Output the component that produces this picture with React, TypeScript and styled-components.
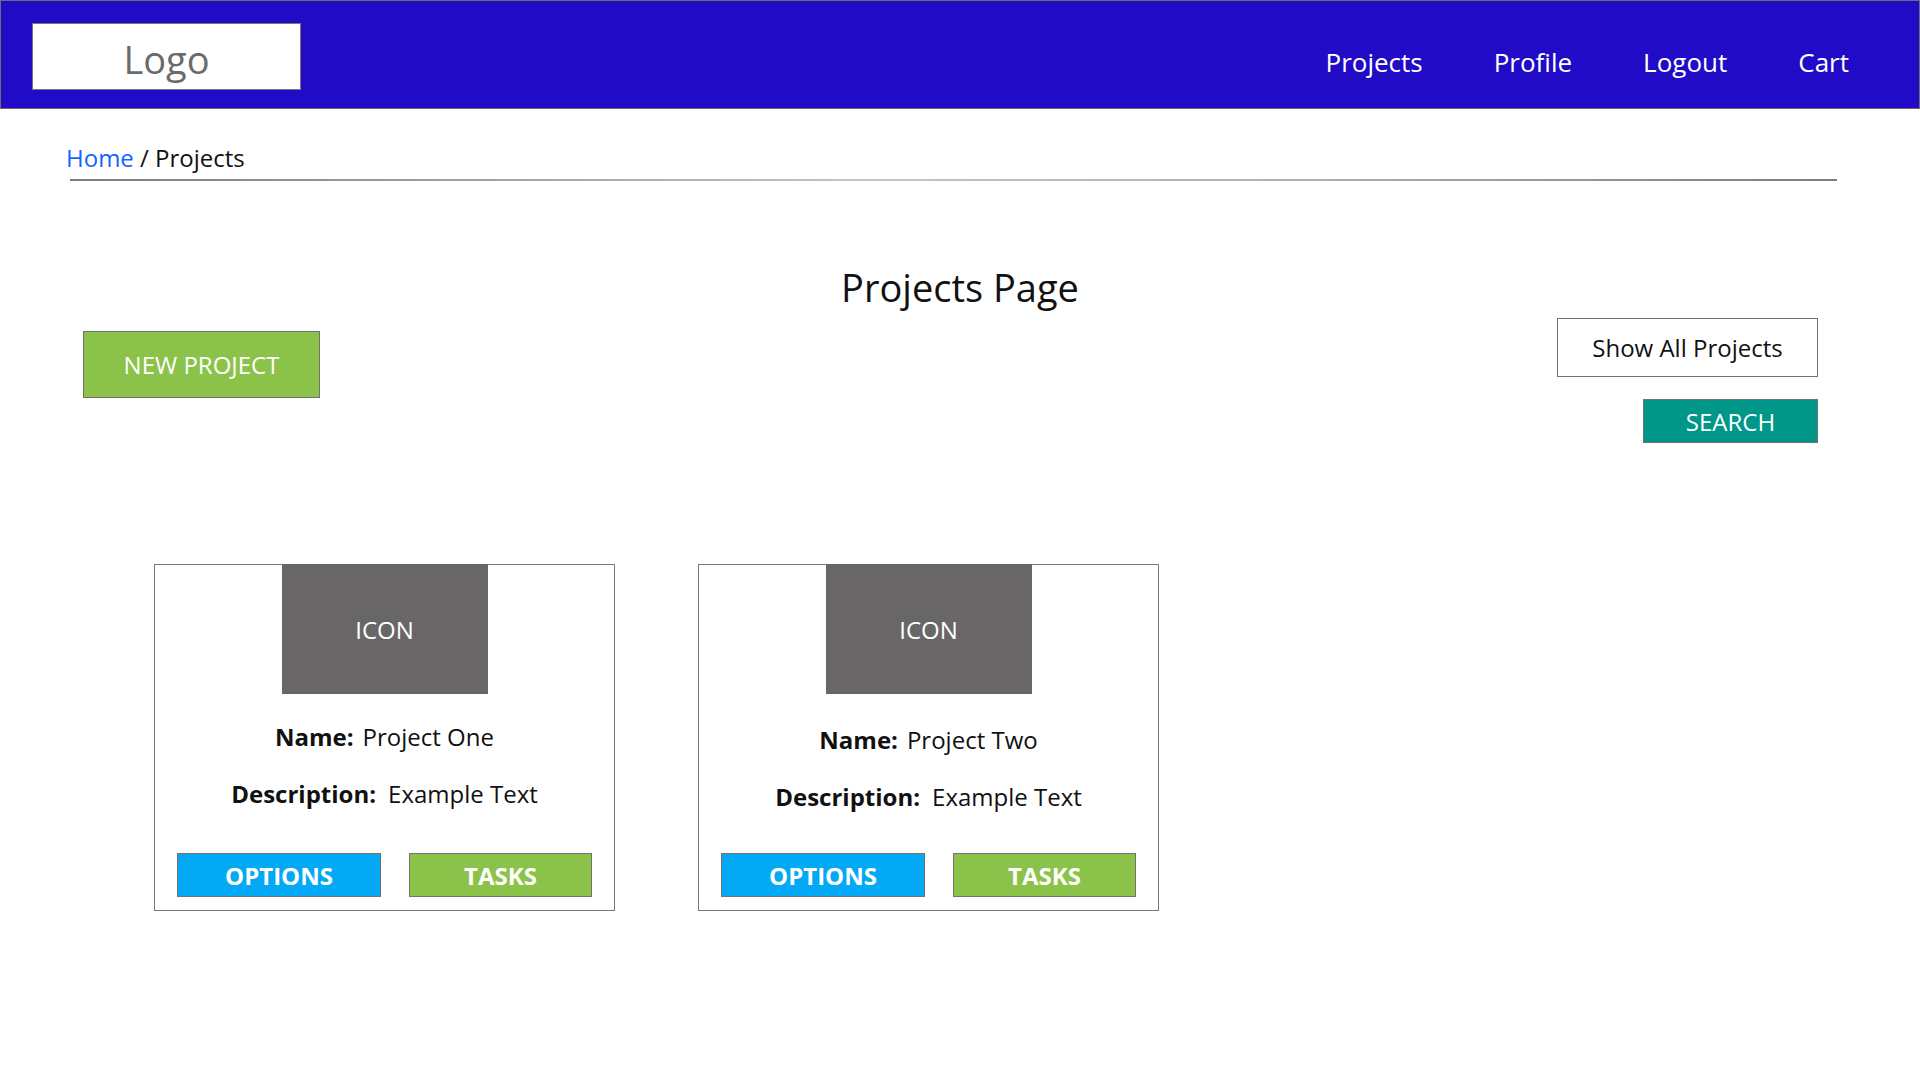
import React from "react";
import styled, { createGlobalStyle } from "styled-components";

const GlobalStyle = createGlobalStyle`
  html, body { margin: 0; padding: 0; background: #ffffff; }
  body {
    font-family: "Open Sans", "Noto Sans", sans-serif;
    color: #111111;
    width: 1920px;
    min-height: 1080px;
    overflow: hidden;
  }
  * { box-sizing: border-box; }
`;

const Header = styled.header`
  height: 109px;
  background: #210bc6;
  border: 1px solid #6e6e6e;
  display: flex;
  align-items: flex-start;
  justify-content: space-between;
  padding: 22px 70px 0 31px;
`;

const LogoBox = styled.div`
  width: 269px;
  height: 67px;
  background: #ffffff;
  border: 1px solid #777777;
  display: flex;
  align-items: center;
  justify-content: center;
  font-size: 38px;
  color: #6b6b6b;
  padding-top: 5px;
`;

const Nav = styled.nav`
  display: flex;
  gap: 71px;
  margin-top: 21px;
`;

const NavLink = styled.a`
  color: #ffffff;
  font-size: 26px;
  text-decoration: none;
`;

const Breadcrumb = styled.div`
  margin: 32px 0 0 66px;
  font-size: 24px;
  color: #111111;
`;

const Crumb = styled.a`
  color: #1464ff;
  text-decoration: none;
`;

const Divider = styled.div`
  margin: 5px 0 0 70px;
  width: 1767px;
  height: 2px;
  background: linear-gradient(90deg, #7d7d7d 0%, #c4c4c4 45%, #b0b0b0 70%, #7d7d7d 100%);
`;

const Title = styled.h1`
  margin: 80px 0 0 0;
  text-align: center;
  font-weight: 400;
  font-size: 38px;
  color: #111111;
`;

const Toolbar = styled.div`
  display: flex;
  justify-content: space-between;
  align-items: flex-start;
  padding: 0 102px 0 83px;
  margin-top: 5px;
`;

const FilledButton = styled.button<{ $bg: string; $w: number; $h: number; $bold?: boolean }>`
  width: ${(p) => p.$w}px;
  height: ${(p) => p.$h}px;
  background: ${(p) => p.$bg};
  border: 1px solid #717171;
  color: #ffffff;
  font-family: inherit;
  font-size: 24px;
  font-weight: ${(p) => (p.$bold ? 700 : 400)};
  display: flex;
  align-items: center;
  justify-content: center;
  padding: 0;
  cursor: pointer;
`;

const NewProject = styled(FilledButton)`
  margin-top: 13px;
`;

const RightColumn = styled.div`
  display: flex;
  flex-direction: column;
  align-items: flex-end;
  gap: 22px;
`;

const OutlineButton = styled.button`
  width: 261px;
  height: 59px;
  background: #ffffff;
  border: 1px solid #717171;
  font-family: inherit;
  font-size: 24px;
  color: #111111;
  padding: 0;
`;

const CardRow = styled.div`
  display: flex;
  gap: 83px;
  padding-left: 154px;
  margin-top: 121px;
`;

const Card = styled.div`
  width: 461px;
  height: 347px;
  border: 1px solid #7a7a7a;
  display: flex;
  flex-direction: column;
  align-items: center;
`;

const IconBox = styled.div`
  width: 206px;
  height: 130px;
  margin-top: -1px;
  background: #686667;
  color: #ffffff;
  font-size: 24px;
  display: flex;
  align-items: center;
  justify-content: center;
`;

const InfoLine = styled.div<{ $top: number }>`
  margin-top: ${(p) => p.$top}px;
  font-size: 24px;
  color: #111111;
`;

const Label = styled.b<{ $space: number }>`
  font-weight: 700;
  margin-right: ${(p) => p.$space}px;
`;

const CardActions = styled.div`
  margin-top: auto;
  margin-bottom: 13px;
  display: flex;
  gap: 28px;
`;

const projects = [
  { name: "Project One", nameTop: 26 },
  { name: "Project Two", nameTop: 29 },
];

export default function App() {
  return (
    <>
      <GlobalStyle />
      <Header>
        <LogoBox>Logo</LogoBox>
        <Nav>
          <NavLink>Projects</NavLink>
          <NavLink>Profile</NavLink>
          <NavLink>Logout</NavLink>
          <NavLink>Cart</NavLink>
        </Nav>
      </Header>
      <Breadcrumb>
        <Crumb>Home</Crumb> / Projects
      </Breadcrumb>
      <Divider />
      <Title>Projects Page</Title>
      <Toolbar>
        <NewProject $bg="#8bc34a" $w={237} $h={67}>
          NEW PROJECT
        </NewProject>
        <RightColumn>
          <OutlineButton>Show All Projects</OutlineButton>
          <FilledButton $bg="#009688" $w={175} $h={44}>
            SEARCH
          </FilledButton>
        </RightColumn>
      </Toolbar>
      <CardRow>
        {projects.map((p) => (
          <Card key={p.name}>
            <IconBox>ICON</IconBox>
            <InfoLine $top={p.nameTop}>
              <Label $space={9}>Name:</Label>
              {p.name}
            </InfoLine>
            <InfoLine $top={24}>
              <Label $space={12}>Description:</Label>
              Example Text
            </InfoLine>
            <CardActions>
              <FilledButton $bg="#03a9f4" $w={204} $h={44} $bold>
                OPTIONS
              </FilledButton>
              <FilledButton $bg="#8bc34a" $w={183} $h={44} $bold>
                TASKS
              </FilledButton>
            </CardActions>
          </Card>
        ))}
      </CardRow>
    </>
  );
}
